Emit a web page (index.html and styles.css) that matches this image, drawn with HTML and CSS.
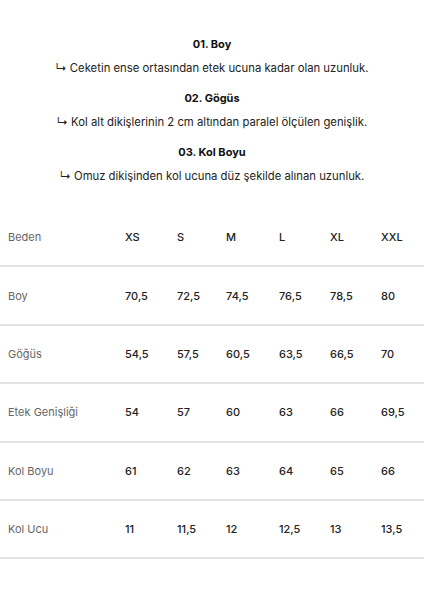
FILE: index.html
```html
<!DOCTYPE html>
<html lang="tr">
<head>
<meta charset="utf-8">
<link rel="stylesheet" href="styles.css">
</head>
<body>
<div class="intro">
  <div class="item">
    <div class="title">01. Boy</div>
    <div class="desc">↳ Ceketin ense ortasından etek ucuna kadar olan uzunluk.</div>
  </div>
  <div class="item">
    <div class="title">02. Gögüs</div>
    <div class="desc">↳ Kol alt dikişlerinin 2 cm altından paralel ölçülen genişlik.</div>
  </div>
  <div class="item">
    <div class="title">03. Kol Boyu</div>
    <div class="desc">↳ Omuz dikişinden kol ucuna düz şekilde alınan uzunluk.</div>
  </div>
</div>
<div class="table">
  <div class="row">
    <div class="label">Beden</div><div class="val">XS</div><div class="val">S</div><div class="val">M</div><div class="val">L</div><div class="val">XL</div><div class="val">XXL</div>
  </div>
  <div class="row">
    <div class="label">Boy</div><div class="val">70,5</div><div class="val">72,5</div><div class="val">74,5</div><div class="val">76,5</div><div class="val">78,5</div><div class="val">80</div>
  </div>
  <div class="row">
    <div class="label">Göğüs</div><div class="val">54,5</div><div class="val">57,5</div><div class="val">60,5</div><div class="val">63,5</div><div class="val">66,5</div><div class="val">70</div>
  </div>
  <div class="row">
    <div class="label">Etek Genişliği</div><div class="val">54</div><div class="val">57</div><div class="val">60</div><div class="val">63</div><div class="val">66</div><div class="val">69,5</div>
  </div>
  <div class="row">
    <div class="label">Kol Boyu</div><div class="val">61</div><div class="val">62</div><div class="val">63</div><div class="val">64</div><div class="val">65</div><div class="val">66</div>
  </div>
  <div class="row">
    <div class="label">Kol Ucu</div><div class="val">11</div><div class="val">11,5</div><div class="val">12</div><div class="val">12,5</div><div class="val">13</div><div class="val">13,5</div>
  </div>
</div>
</body>
</html>
```
FILE: styles.css
```css
html, body {
  margin: 0;
  padding: 0;
  background: #ffffff;
}
body {
  font-family: Inter, "Noto Sans", sans-serif;
  color: #222222;
  width: 424px;
}
.intro {
  padding-top: 37px;
  display: flex;
  flex-direction: column;
  gap: 16px;
  text-align: center;
}
.item {
  display: flex;
  flex-direction: column;
  gap: 9px;
}
.title {
  font-size: 11px;
  font-weight: 700;
  line-height: 15px;
  color: #111;
}
.desc {
  font-size: 11.3px;
  line-height: 14px;
  color: #222;
}
.table {
  margin-top: 26px;
}
.row {
  display: grid;
  grid-template-columns: 117px 52px 49px 53px 51px 51px 1fr;
  align-items: center;
  height: 56.4px;
  padding-left: 8px;
  border-bottom: 2px solid #e2e2e2;
  font-size: 11px;
}
.label {
  color: #666666;
}
.val {
  color: #222222;
  font-weight: 500;
}
```
